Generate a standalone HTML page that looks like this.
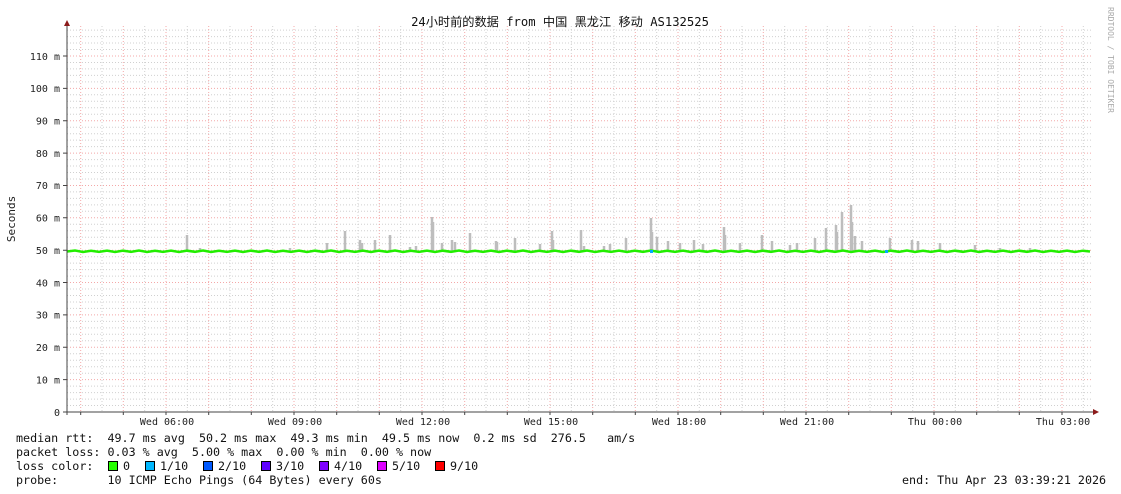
<!DOCTYPE html>
<html><head><meta charset="utf-8"><style>
html,body{margin:0;padding:0;background:#fff;width:1121px;height:494px;overflow:hidden;position:relative}
svg{display:block}
text{font-family:"DejaVu Sans Mono","Liberation Mono",monospace}
.lg{position:absolute;left:16px;font-family:"DejaVu Sans Mono","Liberation Mono",monospace;font-size:11.7px;color:#111;white-space:pre;line-height:14px;margin:0}
.sw{position:absolute;top:2px;width:8px;height:8px;border:1px solid #000}
</style></head><body>
<svg width="1121" height="494" viewBox="0 0 1121 494" xmlns="http://www.w3.org/2000/svg">
<rect width="1121" height="494" fill="#fff"/>
<g stroke="#d0d0d0" stroke-width="1" stroke-dasharray="1,2" fill="none">
<path d="M67 405.5H1093M67 399.1H1093M67 392.6H1093M67 386.1H1093M67 373.2H1093M67 366.7H1093M67 360.2H1093M67 353.7H1093M67 340.8H1093M67 334.3H1093M67 327.9H1093M67 321.4H1093M67 308.4H1093M67 302H1093M67 295.5H1093M67 289H1093M67 276.1H1093M67 269.6H1093M67 263.1H1093M67 256.7H1093M67 243.7H1093M67 237.2H1093M67 230.8H1093M67 224.3H1093M67 211.3H1093M67 204.9H1093M67 198.4H1093M67 191.9H1093M67 179H1093M67 172.5H1093M67 166H1093M67 159.6H1093M67 146.6H1093M67 140.1H1093M67 133.7H1093M67 127.2H1093M67 114.3H1093M67 107.8H1093M67 101.3H1093M67 94.8H1093M67 81.9H1093M67 75.4H1093M67 68.9H1093M67 62.5H1093M67 49.5H1093M67 43H1093M67 36.6H1093M67 30.1H1093"/>
<path d="M102 26V412M144.7 26V412M187.3 26V412M230 26V412M272.7 26V412M315.3 26V412M358 26V412M400.7 26V412M443.3 26V412M486 26V412M528.7 26V412M571.3 26V412M614 26V412M656.7 26V412M699.3 26V412M742 26V412M784.7 26V412M827.3 26V412M870 26V412M912.7 26V412M955.3 26V412M998 26V412M1040.7 26V412M1083.3 26V412"/>
</g>
<g stroke="#f4a8a8" stroke-width="1" stroke-dasharray="1,2" fill="none">
<path d="M67 379.6H1093M67 347.3H1093M67 314.9H1093M67 282.5H1093M67 250.2H1093M67 217.8H1093M67 185.5H1093M67 153.1H1093M67 120.7H1093M67 88.4H1093M67 56H1093"/>
<path d="M80.7 26V412M123.3 26V412M166 26V412M208.7 26V412M251.3 26V412M294 26V412M336.7 26V412M379.3 26V412M422 26V412M464.7 26V412M507.3 26V412M550 26V412M592.7 26V412M635.3 26V412M678 26V412M720.7 26V412M763.3 26V412M806 26V412M848.7 26V412M891.3 26V412M934 26V412M976.7 26V412M1019.3 26V412M1062 26V412"/>
</g>
<g stroke="#bdbdbd" stroke-width="2.5" fill="none">
<path d="M187 251V235M345 251V231M360 251V240M375 251V240M390 251V235M432 251V217M452 251V240M470 251V233M496 251V241M515 251V238M552 251V231M581 251V230M626 251V238M651 251V218M657 251V237M680 251V243M694 251V240M724 251V227M740 251V243M762 251V235M790 251V245M815 251V238M826 251V228M836 251V225M842 251V212M851 251V205M855 251V236M890 251V238M912 251V240M918 251V241M940 251V243M327 251V243M362 251V243M416 251V246M442 251V243M540 251V244M610 251V244M668 251V241M703 251V244M772 251V241M797 251V243M862 251V241M975 251V245M433 251V222M455 251V242M497 251V242M553 251V240M652 251V232M725 251V235M837 251V232M852 251V222M604 251V246M584 251V246M410 251V247M200 251V248M290 251V248M1000 251V248M1030 251V248"/>
</g>
<path d="M67 251.5 L75 250.5 L83 252 L91 250.8 L99 251.9 L107 250.6 L115 252 L123 250.7 L131 251.8 L139 250.5 L147 252 L155 250.8 L163 251.9 L171 250.6 L179 252 L187 250.7 L195 251.8 L203 250.5 L211 252 L219 250.8 L227 251.9 L235 250.6 L243 252 L251 250.7 L259 251.8 L267 250.5 L275 252 L283 250.8 L291 251.9 L299 250.6 L307 252 L315 250.7 L323 251.8 L331 250.5 L339 252 L347 250.8 L355 251.9 L363 250.6 L371 252 L379 250.7 L387 251.8 L395 250.5 L403 252 L411 250.8 L419 251.9 L427 250.6 L435 252 L443 250.7 L451 251.8 L459 250.5 L467 252 L475 250.8 L483 251.9 L491 250.6 L499 252 L507 250.7 L515 251.8 L523 250.5 L531 252 L539 250.8 L547 251.9 L555 250.6 L563 252 L571 250.7 L579 251.8 L587 250.5 L595 252 L603 250.8 L611 251.9 L619 250.6 L627 252 L635 250.7 L643 251.8 L651 250.5 L659 252 L667 250.8 L675 251.9 L683 250.6 L691 252 L699 250.7 L707 251.8 L715 250.5 L723 252 L731 250.8 L739 251.9 L747 250.6 L755 252 L763 250.7 L771 251.8 L779 250.5 L787 252 L795 250.8 L803 251.9 L811 250.6 L819 252 L827 250.7 L835 251.8 L843 250.5 L851 252 L859 250.8 L867 251.9 L875 250.6 L883 252 L891 250.7 L899 251.8 L907 250.5 L915 252 L923 250.8 L931 251.9 L939 250.6 L947 252 L955 250.7 L963 251.8 L971 250.5 L979 252 L987 250.8 L995 251.9 L1003 250.6 L1011 252 L1019 250.7 L1027 251.8 L1035 250.5 L1043 252 L1051 250.8 L1059 251.9 L1067 250.6 L1075 252 L1083 250.7 L1090 251.5" stroke="#22ee00" stroke-width="2.5" fill="none"/>
<rect x="650" y="250" width="3" height="3" fill="#00aaff"/>
<rect x="885" y="250" width="3" height="3" fill="#00aaff"/>
<path d="M67 26V415M63 412H1093" stroke="#444" stroke-width="1"/>
<path d="M64 26L67 20L70 26Z" fill="#8b1a1a"/>
<path d="M1093 409L1099 412L1093 415Z" fill="#8b1a1a"/>
<g stroke="#444" stroke-width="1"><path d="M80.7 412V415M123.3 412V415M166 412V415M208.7 412V415M251.3 412V415M294 412V415M336.7 412V415M379.3 412V415M422 412V415M464.7 412V415M507.3 412V415M550 412V415M592.7 412V415M635.3 412V415M678 412V415M720.7 412V415M763.3 412V415M806 412V415M848.7 412V415M891.3 412V415M934 412V415M976.7 412V415M1019.3 412V415M1062 412V415M63 379.6H67M63 347.3H67M63 314.9H67M63 282.5H67M63 250.2H67M63 217.8H67M63 185.5H67M63 153.1H67M63 120.7H67M63 88.4H67M63 56H67"/></g>
<g font-size="10" fill="#222" text-anchor="end">
<text x="60" y="416">0</text>
<text x="60" y="383.5">10 m</text>
<text x="60" y="351">20 m</text>
<text x="60" y="318.5">30 m</text>
<text x="60" y="286.5">40 m</text>
<text x="60" y="254">50 m</text>
<text x="60" y="221.5">60 m</text>
<text x="60" y="189">70 m</text>
<text x="60" y="157">80 m</text>
<text x="60" y="124.5">90 m</text>
<text x="60" y="92">100 m</text>
<text x="60" y="60">110 m</text>
</g>
<g font-size="10" fill="#222" text-anchor="middle">
<text x="167" y="425">Wed 06:00</text>
<text x="295" y="425">Wed 09:00</text>
<text x="423" y="425">Wed 12:00</text>
<text x="551" y="425">Wed 15:00</text>
<text x="679" y="425">Wed 18:00</text>
<text x="807" y="425">Wed 21:00</text>
<text x="935" y="425">Thu 00:00</text>
<text x="1063" y="425">Thu 03:00</text>
</g>
<text x="15" y="219" font-size="11" fill="#222" text-anchor="middle" transform="rotate(-90 15 219)">Seconds</text>
<text x="1108" y="60" font-size="8" fill="#aaa" text-anchor="middle" transform="rotate(90 1108 60)">RRDTOOL / TOBI OETIKER</text>
<text x="560" y="26" font-size="12.2" fill="#111" text-anchor="middle" style="font-family:'DejaVu Sans Mono','Noto Sans CJK SC',monospace">24小时前的数据 from 中国 黑龙江 移动 AS132525</text>
</svg>
<div class="lg" style="top:431px">median rtt:  49.7 ms avg  50.2 ms max  49.3 ms min  49.5 ms now  0.2 ms sd  276.5   am/s</div>
<div class="lg" style="top:445px">packet loss: 0.03 % avg  5.00 % max  0.00 % min  0.00 % now</div>
<div class="lg" style="top:459px;width:600px;height:14px">loss color:<span class="sw" style="left:92px;background:#26ff00"></span><span style="position:absolute;left:107px">0</span><span class="sw" style="left:129px;background:#00b8ff"></span><span style="position:absolute;left:144px">1/10</span><span class="sw" style="left:187px;background:#0059ff"></span><span style="position:absolute;left:202px">2/10</span><span class="sw" style="left:245px;background:#5e00ff"></span><span style="position:absolute;left:260px">3/10</span><span class="sw" style="left:303px;background:#7e00ff"></span><span style="position:absolute;left:318px">4/10</span><span class="sw" style="left:361px;background:#dd00ff"></span><span style="position:absolute;left:376px">5/10</span><span class="sw" style="left:419px;background:#ff0000"></span><span style="position:absolute;left:434px">9/10</span></div>
<div class="lg" style="top:473px">probe:       10 ICMP Echo Pings (64 Bytes) every 60s</div>
<div class="lg" style="top:473px;left:902px">end: Thu Apr 23 03:39:21 2026</div>
</body></html>
